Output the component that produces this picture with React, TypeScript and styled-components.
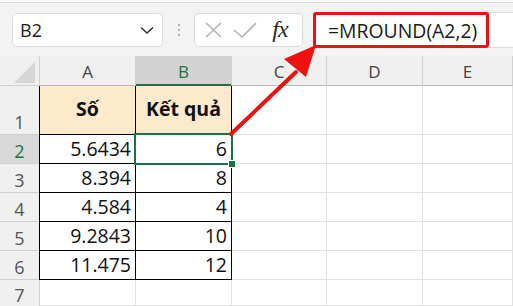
import React from "react";
import styled, { createGlobalStyle } from "styled-components";

const GREEN = "#1e7145";
const GRID = "#e1e1e1";
const HEAD_LINE = "#d0d0d0";
const RED = "#f01010";

const Global = createGlobalStyle`
  html, body { margin: 0; padding: 0; background: #fff; overflow: hidden; }
  body { font-family: "Open Sans", "Noto Sans", sans-serif; }
`;

const Page = styled.div`
  position: relative;
  width: 513px;
  height: 306px;
  overflow: hidden;
  background: #fff;
`;

/* ---------- formula bar ---------- */

const TopStrip = styled.div`
  height: 2px;
  background: #fafafa;
  border-bottom: 1px solid #d9d9d9;
`;

const Toolbar = styled.div`
  height: 53px;
  box-sizing: border-box;
  background: #f3f3f3;
  display: flex;
  align-items: flex-start;
  padding: 10px 0 0 12px;
`;

const NameBox = styled.div`
  width: 151px;
  height: 34px;
  box-sizing: border-box;
  background: #fff;
  border: 1px solid #dcdcdc;
  border-radius: 5px;
  display: flex;
  align-items: center;
  justify-content: space-between;
  padding: 0 7px 0 7px;
  font-size: 18px;
  color: #222;
`;

const Dots = styled.div`
  width: 31px;
  height: 34px;
  display: flex;
  flex-direction: column;
  align-items: center;
  justify-content: center;
  gap: 3px;
  & > span {
    width: 2px;
    height: 2px;
    border-radius: 1px;
    background: #9a9a9a;
  }
`;

const ButtonGroup = styled.div`
  width: 109px;
  height: 34px;
  box-sizing: border-box;
  background: #fff;
  border: 1px solid #dcdcdc;
  border-radius: 5px;
  display: flex;
  align-items: center;
  padding-left: 8px;
`;

const IconButton = styled.div<{ $w: number }>`
  width: ${(p) => p.$w}px;
  height: 32px;
  display: flex;
  align-items: center;
  justify-content: center;
`;

const Fx = styled.span`
  font-family: "Liberation Serif", "DejaVu Serif", serif;
  font-style: italic;
  font-size: 24px;
  color: #2b2b2b;
  letter-spacing: -1px;
  line-height: 1;
  margin-top: -2px;
`;

const FormulaInput = styled.div`
  flex: 1;
  margin-left: 10px;
  height: 36px;
  margin-top: -1px;
  box-sizing: border-box;
  background: #fff;
  border: 1px solid #dcdcdc;
  border-right: none;
  border-radius: 5px 0 0 5px;
  display: flex;
  align-items: stretch;
`;

const Highlight = styled.div`
  width: 176px;
  margin: -1px 0 -1px -1px;
  box-sizing: border-box;
  border: 3px solid ${RED};
  border-radius: 3px;
  display: flex;
  align-items: center;
  padding-left: 12px;
  font-size: 19.4px;
  color: #1a1a1a;
  white-space: nowrap;
`;

/* ---------- worksheet grid ---------- */

const Sheet = styled.div`
  display: grid;
  grid-template-columns: 40px 96px 96px 95px 96px 1fr;
  grid-template-rows: 30px 49px repeat(5, 29px) 26px;
`;

const Corner = styled.div`
  background: #f0f0f0;
  border-right: 1px solid ${HEAD_LINE};
  border-bottom: 1px solid ${HEAD_LINE};
  display: flex;
  align-items: flex-end;
  justify-content: flex-end;
  padding: 0 4px 2px 0;
`;

const ColHead = styled.div<{ $active?: boolean }>`
  position: relative;
  z-index: 2;
  background: ${(p) => (p.$active ? "#d3d3d3" : "#f0f0f0")};
  border-right: 1px solid ${HEAD_LINE};
  border-bottom: 1px solid ${(p) => (p.$active ? GREEN : "#b8b8b8")};
  box-shadow: ${(p) => (p.$active ? `inset 0 -1px 0 ${GREEN}` : "none")};
  color: ${(p) => (p.$active ? GREEN : "#444")};
  font-size: 17px;
  display: flex;
  align-items: center;
  justify-content: center;
  padding-top: 1px;
`;

const RowHead = styled.div<{ $active?: boolean; $partial?: boolean }>`
  background: ${(p) => (p.$active ? "#d9d9d9" : "#f0f0f0")};
  border-right: 1px solid ${(p) => (p.$active ? GREEN : HEAD_LINE)};
  border-bottom: ${(p) => (p.$partial ? "none" : `1px solid ${HEAD_LINE}`)};
  color: ${(p) => (p.$active ? GREEN : "#555")};
  font-size: 18px;
  line-height: ${(p) => (p.$partial ? "20px" : "22px")};
  display: flex;
  align-items: flex-end;
  justify-content: center;
  padding-bottom: 1px;
`;

const Cell = styled.div<{
  $boxed?: boolean;
  $head?: boolean;
  $first?: boolean;
  $topEdge?: boolean;
}>`
  position: relative;
  box-sizing: border-box;
  background: ${(p) => (p.$head ? "#fde9cb" : "#fff")};
  border-right: 1px solid ${(p) => (p.$boxed ? "#000" : GRID)};
  border-bottom: 1px solid ${(p) => (p.$boxed ? "#000" : GRID)};
  box-shadow: ${(p) =>
    [p.$first ? "-1px 0 0 #000" : "", p.$topEdge ? "0 -1px 0 #000" : ""]
      .filter(Boolean)
      .join(", ") || "none"};
  font-size: 19.5px;
  line-height: 24px;
  color: #111;
  font-weight: ${(p) => (p.$head ? 700 : 400)};
  display: flex;
  align-items: ${(p) => (p.$head ? "center" : "flex-end")};
  justify-content: ${(p) => (p.$head ? "center" : "flex-end")};
  padding: ${(p) => (p.$head ? "0 0 2px 0" : "0 4px 2px 0")};
`;

const Selection = styled.div`
  position: absolute;
  top: -2px;
  left: -2px;
  right: -2px;
  bottom: -2px;
  border: 2px solid ${GREEN};
  pointer-events: none;
  z-index: 3;
`;

const FillHandle = styled.div`
  position: absolute;
  right: -4px;
  bottom: -4px;
  width: 6px;
  height: 6px;
  background: ${GREEN};
  outline: 1px solid #fff;
`;

const Annotation = styled.svg`
  position: absolute;
  left: 0;
  top: 0;
  z-index: 5;
  pointer-events: none;
`;

const rows: Array<[string, string]> = [
  ["5.6434", "6"],
  ["8.394", "8"],
  ["4.584", "4"],
  ["9.2843", "10"],
  ["11.475", "12"],
];

const columns = ["A", "B", "C", "D", "E"];

export default function App() {
  return (
    <Page>
      <Global />
      <TopStrip />
      <Toolbar>
        <NameBox>
          <span>B2</span>
          <svg width="16" height="10" viewBox="0 0 16 10">
            <path d="M2 2.5 L8 8 L14 2.5" fill="none" stroke="#333" strokeWidth="1.6" />
          </svg>
        </NameBox>
        <Dots>
          <span />
          <span />
          <span />
        </Dots>
        <ButtonGroup>
          <IconButton $w={22}>
            <svg width="20" height="16" viewBox="0 0 20 16">
              <path d="M2 1 L17 15 M17 1 L2 15" stroke="#b4b4b4" strokeWidth="1.6" fill="none" />
            </svg>
          </IconButton>
          <IconButton $w={40}>
            <svg width="26" height="16" viewBox="0 0 26 16">
              <path d="M2 8 L10 15 L24 1" stroke="#b4b4b4" strokeWidth="1.6" fill="none" />
            </svg>
          </IconButton>
          <IconButton $w={30}>
            <Fx>fx</Fx>
          </IconButton>
        </ButtonGroup>
        <FormulaInput>
          <Highlight>=MROUND(A2,2)</Highlight>
        </FormulaInput>
      </Toolbar>

      <Sheet>
        <Corner>
          <svg width="21" height="21" viewBox="0 0 21 21">
            <polygon points="21,0 21,21 0,21" fill="#d6d6d6" />
          </svg>
        </Corner>
        {columns.map((c) => (
          <ColHead key={c} $active={c === "B"}>
            {c}
          </ColHead>
        ))}

        <RowHead>1</RowHead>
        <Cell $boxed $head $first $topEdge>
          Số
        </Cell>
        <Cell $boxed $head $topEdge>
          Kết quả
        </Cell>
        <Cell />
        <Cell />
        <Cell />

        {rows.map(([a, b], i) => (
          <React.Fragment key={a}>
            <RowHead $active={i === 0}>{i + 2}</RowHead>
            <Cell $boxed $first>
              {a}
            </Cell>
            <Cell $boxed>
              {b}
              {i === 0 && (
                <Selection>
                  <FillHandle />
                </Selection>
              )}
            </Cell>
            <Cell />
            <Cell />
            <Cell />
          </React.Fragment>
        ))}

        <RowHead $partial>7</RowHead>
        <Cell />
        <Cell />
        <Cell />
        <Cell />
        <Cell />
      </Sheet>

      <Annotation width="513" height="306" viewBox="0 0 513 306">
        <line x1="231" y1="134" x2="296" y2="72" stroke={RED} strokeWidth="4" strokeLinecap="round" />
        <polygon points="284,59 316,45 306,77" fill={RED} />
      </Annotation>
    </Page>
  );
}
